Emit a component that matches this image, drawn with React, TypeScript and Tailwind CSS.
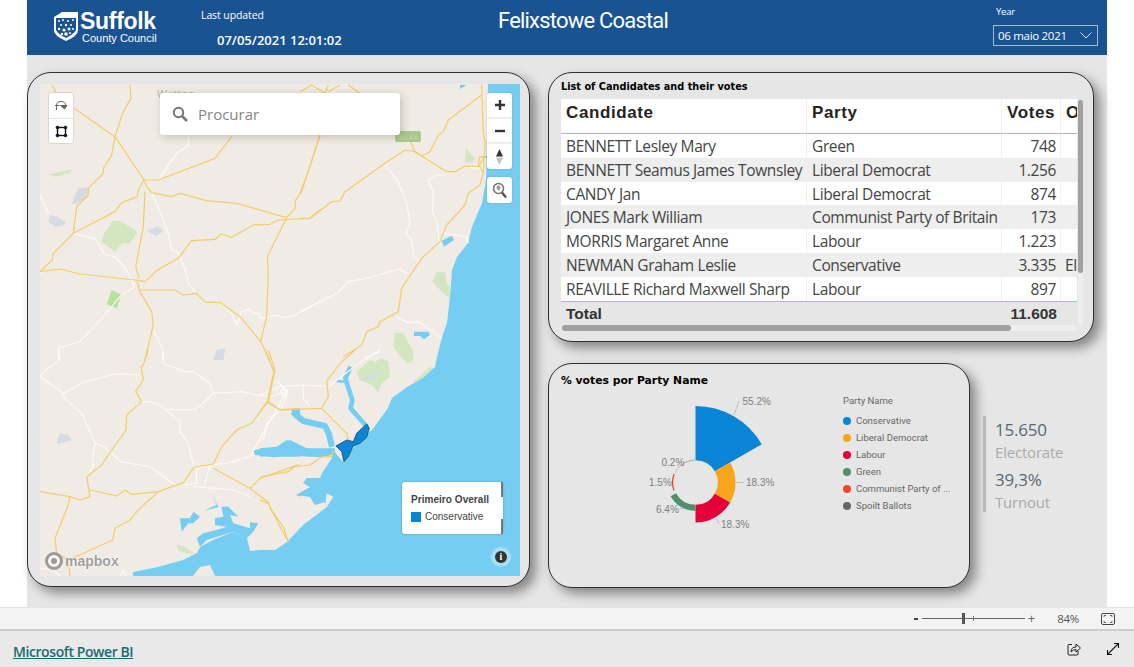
import React from "react";

const Z6 = "translate(20 60) scale(0.3333)";
const Z7 = "translate(20 350) scale(0.3333)";
const Z4 = "translate(260 350) scale(0.3333)";
const Z9 = "translate(300 70) scale(0.3333)";

const roads: { t: string; y: string[]; w: string[] }[] = [
  {
    t: Z6,
    w: [
      "60,405 85,460",
      "505,225 505,258 470,280 420,355",
      "395,398 420,455 445,520 455,570 475,580 495,625 505,670 525,695",
      "160,520 225,535 255,585 285,590 320,630 345,680 330,690 305,705 245,775 180,845 115,865 115,900",
      "600,727 635,760 650,795 665,755 688,748 700,760 715,760 722,775 745,770 770,765 785,772 820,768 900,725",
      "400,810 430,870 430,900",
      "60,640 80,630",
    ],
    y: [
      "95,75 110,100",
      "160,143 285,230 372,360",
      "330,75 333,115 310,155 285,230 275,285 250,325 250,340 205,385 205,405 170,440 160,520",
      "372,360 415,360 585,295 635,230",
      "372,360 355,390 352,410 305,428 285,455 160,520 100,580 97,600 60,635",
      "60,635 120,627 180,642 345,660 375,665 410,632 475,595 515,542 585,538 603,522 635,532 700,495 750,493 775,480 870,475 900,450",
      "375,395 370,500 347,620 357,655",
      "372,360 380,380 395,398 455,410 480,400 560,422 650,430 800,473",
      "800,473 825,445 827,420 845,395 900,225",
      "800,473 742,590 745,640 740,770 722,845",
      "350,665 360,690 465,690 490,705 530,700 555,727 600,727 660,770 722,845 750,900",
      "357,690 395,755 400,795 375,900",
    ],
  },
  {
    t: Z7,
    w: [
      "115,0 120,30 70,65 60,80 130,130 195,95 285,72 360,75",
      "125,130 135,145 185,190 225,280 218,320 220,350 200,380",
      "225,280 260,295 300,335 390,350 465,405",
      "365,155 390,155 420,165 480,215 480,245 505,280 522,352",
      "445,178 525,180 580,130 670,125 710,135 750,140 800,125 770,90",
      "430,0 430,40 495,65 520,65 570,100 580,130",
      "580,342 530,355 530,400 490,405",
      "555,400 570,345 620,340 690,320 740,230 800,125",
      "520,410 640,420 690,440",
      "60,655 100,660 120,680",
      "300,680 310,660 320,680",
    ],
    y: [
      "385,0 370,45 363,50 370,90 347,125 365,155 320,195 318,240 265,315 245,345 200,380 210,440 180,450 150,440 60,425",
      "150,440 145,465 105,565 110,610 145,630 150,680",
      "735,0 762,65 742,155 695,220 650,240 605,290 580,342 522,352 490,397 415,425 335,433 315,420 290,438 210,420",
      "415,425 355,480 330,510 285,535 278,570 145,630",
      "742,155 780,180 840,175",
      "580,355 690,415 725,380 805,365 830,345 840,345",
      "690,415 745,457 750,475 790,530 805,578",
    ],
  },
  {
    t: Z4,
    w: [
      "0,135 60,110 130,105 205,110",
      "130,105 130,145 150,170",
      "60,100 80,140 60,180 20,220 10,270",
      "205,110 290,45 360,0",
    ],
    y: [
      "25,155 60,180 185,175 205,140 200,95 240,40 285,0",
      "0,185 25,155 45,60 25,0",
      "185,175 260,250 265,270",
      "0,385 100,350 150,345 185,320 215,320 220,300",
      "0,450 25,460 65,540 85,575",
    ],
  },
  {
    t: Z9,
    w: [
      "255,285 295,335 320,400 330,460 318,490 335,510 342,560 360,575",
      "438,315 415,315 385,330 400,370 397,425 412,460 417,515",
      "430,490 500,500 505,520",
      "0,725 110,670 145,635 200,625 295,597 325,610",
      "290,740 320,757 360,757 425,805",
      "195,865 240,845",
      "510,292 550,295",
    ],
    y: [
      "545,45 550,190 555,215 550,310 540,345 505,370 495,405 440,465 420,515 365,565 305,655 295,725 240,755 235,770 200,785 185,825 130,860",
      "545,75 445,150 430,185 415,195 390,245 365,258 345,245 315,240 255,280 135,365 120,393 95,395 30,445 0,445",
      "345,245 440,305 465,305 495,288 535,290 555,260 540,260 535,280 550,310",
      "325,200 345,245",
      "60,195 30,290 0,370",
      "0,65 35,45 75,70 85,45",
      "85,65 120,45",
      "145,45 180,70",
    ],
  },
];

const greens: [string, string][] = [
  [Z6, "85,343 160,328 145,340 105,350"],
  [Z6, "280,480 305,485 352,515 330,550 305,550 285,575 245,545 250,525"],
  [Z9, "497,235 510,250 525,265 515,278 495,275"],
  [Z9, "410,605 435,605 440,640 450,650 448,685 430,670 397,635"],
  [Z9, "285,790 310,790 340,845 340,870 310,870 280,830"],
  [Z4, "290,65 330,30 345,35 365,25 385,35 390,80 365,100 355,125 335,105 300,90"],
  [Z4, "405,0 445,0 460,35 440,40 420,10"],
  [Z4, "460,95 510,50 525,60 490,95"],
];
const greens2: [string, string][] = [[Z6, "275,690 305,705 290,745 260,733"]];
const lakes: [string, string][] = [
  [Z6, "175,385 205,382 205,408 170,432 155,432"],
  [Z6, "90,465 110,470 135,485 135,495 105,500 85,485"],
  [Z6, "380,513 415,498 430,513 410,528"],
  [Z6, "590,870 615,865 605,900 580,900"],
  [Z7, "595,0 615,0 610,30 580,30"],
  [Z7, "120,250 145,255 155,270 110,282"],
  [Z4, "305,85 370,62 340,90"],
];
const water: [string, string][] = [
  [Z4, "0,295 50,290 90,270 140,295 225,295 225,312 190,322 150,320 60,315 0,320"],
  [Z7, "700,300 740,295 765,295 800,270 840,290 840,320 790,320 760,322 705,315"],
  [Z7, "830,435 840,430 840,440"],
  [Z7, "815,180 840,175 840,215 820,200"],
  [Z7, "480,505 510,505 520,485 540,500 520,520 505,520 485,545"],
  [Z7, "585,505 610,500 605,470 595,470 570,425 590,465 552,482 600,470 625,470 655,500 630,495 640,520 690,535 690,517 715,520 700,545 680,565 640,545 560,570 540,590 530,565 550,550 590,540 620,530 585,525"],
  [Z9, "425,512 455,497 462,510 432,530"],
  [Z9, "342,785 385,785 390,795 372,808 360,798 342,798"],
  [Z9, "480,45 500,45 480,57"],
  [Z9, "545,258 565,258 565,264 548,264"],
];
const rivers: [string, number][] = [
  ["98,185 130,213 195,228 206,250 216,290", 18],
  ["272,50 256,85 264,110 277,150 272,175 292,198 322,232", 14],
  ["230,93 262,96", 8],
];

const sea =
  "520,84 488,84 486,180 482,203 472,227 468,243 457,257 452,270 450,297 447,323 442,337 437,357 435,367 423,378 407,387 392,398 388,408 372,430 362,437 343,462 333,450 332,458 322,473 320,478 307,478 303,483 310,487 296,495 310,497 315,505 325,502 327,507 303,525 287,542 275,550 260,550 250,551 247,538 233,532 213,540 200,547 197,553 183,560 158,567 133,572 133,576 520,576";

function MapDrawing() {
  return (
    <svg viewBox="40 84 480 492" className="block w-full h-full">
      <rect x="40" y="84" width="480" height="492" fill="#f0ebe4" />
      {greens.map(([t, p], i) => (
        <polygon key={i} transform={t} points={p} fill="#d2e6bf" />
      ))}
      {greens2.map(([t, p], i) => (
        <polygon key={i} transform={t} points={p} fill="#b5e29f" />
      ))}
      {lakes.map(([t, p], i) => (
        <polygon key={i} transform={t} points={p} fill="#d5dae3" />
      ))}
      <polygon points={sea} fill="#75cdf2" />
      {water.map(([t, p], i) => (
        <polygon key={i} transform={t} points={p} fill="#75cdf2" />
      ))}
      {rivers.map(([p, w], i) => (
        <polyline key={i} transform={Z4} points={p} fill="none" stroke="#75cdf2" strokeWidth={w} strokeLinejoin="round" />
      ))}
      <polygon transform={Z4} points="200,430 220,440 200,472 197,450" fill="#f0ebe4" />
      <polygon points="193,576 200,567 210,565 215,576" fill="#f0ebe4" />
      <polygon transform={Z7} points="470,585 495,590 525,610 495,610 475,600" fill="#d2e6bf" />
      {roads.map((g, i) => (
        <g key={i} transform={g.t} fill="none" stroke="#fbfaf7" strokeWidth="3.6" strokeLinejoin="round">
          {g.w.map((p, j) => (
            <polyline key={j} points={p} />
          ))}
        </g>
      ))}
      <circle cx="284" cy="392" r="3.5" fill="none" stroke="#fbfaf7" strokeWidth="1.3" />
      {roads.map((g, i) => (
        <g key={i} transform={g.t} fill="none" stroke="#f2cd68" strokeWidth="3.6" strokeLinejoin="round">
          {g.y.map((p, j) => (
            <polyline key={j} points={p} />
          ))}
        </g>
      ))}
      <polygon
        transform={Z4}
        points="320,222 328,235 320,262 300,280 280,288 265,320 252,335 245,305 228,288 260,270 280,275 290,250"
        fill="#0a85d6"
        stroke="#1d4a6e"
        strokeWidth="2.5"
      />
      <rect x="395" y="131" width="26" height="11" rx="2" fill="#a7c98f" />
      <text x="408" y="140" textAnchor="middle" fontSize="8" fill="#c4d49a" fontFamily="'Liberation Sans',sans-serif">
        A144
      </text>
      <text x="157" y="98" fontSize="11" fill="#b5b2ad" fontFamily="'Open Sans',sans-serif">
        Wetton
      </text>
    </svg>
  );
}

function MapCard() {
  return (
    <div className="relative w-[503px] h-[515px] shrink-0 rounded-[24px] border border-[#2e2e2e] bg-[#e6e6e6] pt-[11px] pl-[12px] shadow-[6px_6px_12px_rgba(0,0,0,0.42)]">
      <div className="relative w-[480px] h-[492px] overflow-hidden">
        <MapDrawing />
        <div className="absolute left-[8px] top-[8px] w-[26px] h-[52px] rounded-[3px] bg-white border border-[#ddd7ce] flex flex-col items-center">
          <div className="h-[26px] w-full flex items-center justify-center border-b border-[#e8e8e8]">
            <svg width="14" height="14" viewBox="0 0 14 14" fill="none" stroke="#666" strokeWidth="1">
              <path d="M2.5 11 V6.5 Q2.5 2.5 7 2.5 Q11.5 2.5 11.5 6" />
              <path d="M1 6.5 H5.5 M6.5 6.5 H13 L10.5 10 Z" fill="#666" />
            </svg>
          </div>
          <div className="flex-1 w-full flex items-center justify-center">
            <svg width="13" height="13" viewBox="0 0 13 13" fill="#111" stroke="#111">
              <rect x="2.5" y="2.5" width="8" height="8" fill="none" strokeWidth="1.4" />
              <circle cx="2.5" cy="2.5" r="1.3" />
              <circle cx="10.5" cy="2.5" r="1.3" />
              <circle cx="2.5" cy="10.5" r="1.3" />
              <circle cx="10.5" cy="10.5" r="1.3" />
            </svg>
          </div>
        </div>
        <div className="absolute left-[120px] top-[9px] w-[240px] h-[42px] rounded-[3px] bg-white shadow-[2px_2px_8px_rgba(90,70,50,0.28)] flex items-center pl-[12px] gap-[10px]">
          <svg width="16" height="16" viewBox="0 0 16 16" fill="none" stroke="#757575" strokeWidth="2">
            <circle cx="6.5" cy="6.5" r="4.7" />
            <path d="M10 10 L15 15" strokeWidth="2.5" />
          </svg>
          <span className="text-[15px] text-[#858585] font-['Open_Sans',sans-serif]">Procurar</span>
        </div>
        <div className="absolute left-[447px] top-[9px] w-[25px] h-[76px] rounded-[3px] bg-white shadow-[0_0_2px_rgba(0,0,0,0.2)] flex flex-col items-center">
          <div className="h-[26px] w-full flex items-center justify-center border-b-2 border-[#eeeeee]">
            <svg width="12" height="12" viewBox="0 0 12 12">
              <path d="M6 1 V11 M1 6 H11" stroke="#333" strokeWidth="2.4" />
            </svg>
          </div>
          <div className="h-[25px] w-full flex items-center justify-center border-b-2 border-[#eeeeee]">
            <svg width="10" height="4" viewBox="0 0 10 4">
              <path d="M0 2 H10" stroke="#333" strokeWidth="2.4" />
            </svg>
          </div>
          <div className="flex-1 w-full flex items-center justify-center">
            <svg width="9" height="16" viewBox="0 0 9 16">
              <path d="M4.5 0 L8 7.5 H1 Z" fill="#333" />
              <path d="M4.5 16 L8 8.5 H1 Z" fill="#c4c4c4" />
            </svg>
          </div>
        </div>
        <div className="absolute left-[447px] top-[93px] w-[25px] h-[26px] rounded-[3px] bg-white shadow-[0_0_2px_rgba(0,0,0,0.2)] flex items-center justify-center">
          <svg width="15" height="17" viewBox="0 0 15 17" fill="none">
            <circle cx="6.5" cy="6.5" r="5" stroke="#777" strokeWidth="1.6" />
            <path d="M6.5 3.5 a2 2 0 0 1 2 2 c0 1.2 -2 3.5 -2 3.5 s-2 -2.3 -2 -3.5 a2 2 0 0 1 2 -2z" fill="#999" />
            <path d="M10 10.5 L14 15.5" stroke="#555" strokeWidth="2.4" />
          </svg>
        </div>
        <div className="absolute left-[362px] top-[398px] w-[101px] h-[52px] rounded-[3px] bg-white shadow-[0_0_2px_rgba(40,80,110,0.5)] pl-[9px] pt-[10px] font-['Liberation_Sans',sans-serif]">
          <div className="text-[10px] leading-[15px] font-bold text-[#444] tracking-[0.05px] whitespace-nowrap">Primeiro Overall</div>
          <div className="mt-[3px] flex items-center gap-[4px]">
            <span className="w-[10px] h-[10px] bg-[#0a85d6]" />
            <span className="text-[10px] leading-[14px] text-[#444]">Conservative</span>
          </div>
          <span className="absolute right-0 top-0 w-[2px] h-[15px] bg-[#777]" />
          <span className="absolute right-0 bottom-0 w-[2px] h-[15px] bg-[#777]" />
        </div>
        <div className="absolute left-[451px] top-[463px] w-[20px] h-[20px] rounded-full bg-[#a6def5] flex items-center justify-center">
          <span className="w-[12px] h-[12px] rounded-full bg-[#333] flex items-center justify-center text-white text-[10px] leading-none font-bold font-['Liberation_Serif',serif]">
            i
          </span>
        </div>
        <div className="absolute left-[5px] top-[468px] flex items-center gap-[2px]">
          <span className="w-[18px] h-[18px] rounded-full border-[3px] border-[#9a9a9a] bg-white/70 flex items-center justify-center">
            <span className="w-[6px] h-[6px] rounded-full bg-[#9a9a9a]" />
          </span>
          <span className="text-[14px] leading-[16px] font-bold text-[#a0a0a0] font-['Liberation_Sans',sans-serif] [text-shadow:0_0_2px_#fff,0_0_2px_#fff]">
            mapbox
          </span>
        </div>
      </div>
    </div>
  );
}

const rows: [string, string, string, string][] = [
  ["BENNETT Lesley Mary", "Green", "748", ""],
  ["BENNETT Seamus James Townsley", "Liberal Democrat", "1.256", ""],
  ["CANDY Jan", "Liberal Democrat", "874", ""],
  ["JONES Mark William", "Communist Party of Britain", "173", ""],
  ["MORRIS Margaret Anne", "Labour", "1.223", ""],
  ["NEWMAN Graham Leslie", "Conservative", "3.335", "Elected"],
  ["REAVILLE Richard Maxwell Sharp", "Labour", "897", ""],
];
const rowH = [24, 24, 23, 24, 24, 24, 24];
const cols = "grid grid-cols-[246px_195px_59px_16px]";

function TableCard() {
  return (
    <div className="relative w-[546px] h-[270px] shrink-0 rounded-[24px] border border-[#2e2e2e] bg-[#e6e6e6] pt-[8px] pl-[12px] shadow-[6px_6px_12px_rgba(0,0,0,0.42)]">
      <div className="text-[9.75px] leading-[12px] font-bold text-black font-['DejaVu_Sans',sans-serif]">
        List of Candidates and their votes
      </div>
      <div className="mt-[6px] w-[516px] overflow-hidden font-['Open_Sans',sans-serif] text-[#444]">
        <div className={`${cols} h-[35px] bg-white border-b border-[#7fd0ca] text-[#252423] font-bold text-[17px] leading-[28px] font-['Liberation_Sans',sans-serif] tracking-[0.6px]`}>
          <div className="pl-[5px] border-r border-[#f0f0f0]">Candidate</div>
          <div className="pl-[5px] border-r border-[#f0f0f0]">Party</div>
          <div className="pl-[5px] border-r border-[#f0f0f0]">Votes</div>
          <div className="pl-[5px] overflow-hidden">Outcome</div>
        </div>
        {rows.map((r, i) => (
          <div
            key={r[0]}
            style={{ height: rowH[i] }}
            className={`${cols} items-center text-[15.5px] leading-[20px] tracking-[-0.38px] whitespace-nowrap ${i % 2 ? "bg-[#eeeeee]" : "bg-white"}`}
          >
            <div className="pl-[5px] h-full flex items-center border-r border-[#f0f0f0]">{r[0]}</div>
            <div className="pl-[5px] h-full flex items-center border-r border-[#f0f0f0]">{r[1]}</div>
            <div className="pr-[4px] h-full flex items-center justify-end border-r border-[#f0f0f0]">{r[2]}</div>
            <div className="pl-[4px] h-full flex items-center overflow-hidden">{r[3]}</div>
          </div>
        ))}
        <div className={`${cols} h-[24px] pb-[2px] items-center border-t border-[#7fd0ca] bg-[#e6e6e6] font-bold text-[15.5px] text-[#333] font-['Liberation_Sans',sans-serif]`}>
          <div className="pl-[5px] col-span-2">Total</div>
          <div className="pr-[4px] text-right">11.608</div>
          <div />
        </div>
      </div>
      <div className="ml-[1px] w-[515px] h-[6px] rounded-full bg-[#eeeeee]">
        <div className="w-[449px] h-full rounded-full bg-[#a0a0a0]" />
      </div>
      <div className="absolute left-[529px] top-[27px] w-[5px] h-[224px] rounded-full bg-[#eeeeee]">
        <div className="h-[173px] rounded-full bg-[#a0a0a0]" />
      </div>
    </div>
  );
}

const legend: [string, string][] = [
  ["Conservative", "#0a85d6"],
  ["Liberal Democrat", "#f8a51b"],
  ["Labour", "#e4003b"],
  ["Green", "#50916c"],
  ["Communist Party of ...", "#f4452d"],
  ["Spoilt Ballots", "#666666"],
];

function sector(r: number, r0: number, a0: number, a1: number) {
  const cx = 695.5;
  const cy = 480.5;
  const p = (rad: number, a: number) => {
    const t = (a * Math.PI) / 180;
    return `${(cx + rad * Math.sin(t)).toFixed(2)} ${(cy - rad * Math.cos(t)).toFixed(2)}`;
  };
  return `M${p(r0, a0)} L${p(r, a0)} A${r} ${r} 0 0 1 ${p(r, a1)} L${p(r0, a1)} A${r0} ${r0} 0 0 0 ${p(r0, a0)} Z`;
}

function Donut() {
  const labels: [string, number, number][] = [
    ["55.2%", 742.5, 402.5],
    ["18.3%", 746, 484],
    ["18.3%", 721, 525.5],
    ["6.4%", 656, 511],
    ["1.5%", 649, 484],
    ["0.2%", 661.5, 464],
  ];
  return (
    <svg viewBox="640 390 150 150" className="w-[150px] h-[150px] shrink-0">
      <path d={sector(76.5, 22.3, 0, 60)} fill="#0a85d6" />
      <path d={sector(40, 22.3, 60, 120)} fill="#f8a51b" />
      <path d={sector(40, 22.3, 120, 180)} fill="#e4003b" />
      <path d={sector(28.5, 22.3, 180, 241)} fill="#50916c" />
      <path d={sector(23.6, 22.3, 250, 292)} fill="#f4452d" />
      <path d={sector(22.9, 22.3, 295, 360)} fill="#a8a8a8" />
      <g stroke="#b5b5b5" strokeWidth="0.8" fill="none">
        <path d="M734 413 L739 399" />
        <path d="M736 480.5 H744" />
        <path d="M716 516 L719 522" />
        <path d="M679 507 L683 506" />
        <path d="M683 461 L695 458" />
      </g>
      {labels.map(([t, x, y]) => (
        <text key={t + x} x={x} y={y} fontSize="10" fill="#808080" fontFamily="'Liberation Sans',sans-serif">
          {t}
        </text>
      ))}
    </svg>
  );
}

function DonutCard() {
  return (
    <div className="w-[422px] h-[225px] shrink-0 rounded-[24px] border border-[#2e2e2e] bg-[#e6e6e6] pt-[9px] pl-[12px] shadow-[6px_6px_12px_rgba(0,0,0,0.42)]">
      <div className="text-[10.8px] leading-[15px] font-bold text-black font-['DejaVu_Sans',sans-serif]">% votes por Party Name</div>
      <div className="flex mt-[2px]">
        <div className="ml-[79px] mt-[2px]">
          <Donut />
        </div>
        <div className="ml-[53px] mt-[5px] font-['Roboto',sans-serif] text-[#666]">
          <div className="text-[9.5px] leading-[12px] mb-[8px]">Party Name</div>
          <div className="flex flex-col gap-[5px]">
            {legend.map(([n, c]) => (
              <div key={n} className="flex items-center gap-[5px] h-[12px] text-[9.5px] leading-[12px] whitespace-nowrap">
                <span style={{ background: c }} className="w-[8px] h-[8px] rounded-full" />
                {n}
              </div>
            ))}
          </div>
        </div>
      </div>
    </div>
  );
}

function Kpi() {
  return (
    <div className="ml-[13px] mt-[53px] h-[96px] border-l-[3px] border-[#b9b9b9] pl-[9px] font-['Open_Sans',sans-serif] tracking-[-0.2px]">
      <div className="text-[17px] leading-[27px] text-[#5c6670]">15.650</div>
      <div className="text-[15px] leading-[18px] text-[#aaaaaa]">Electorate</div>
      <div className="mt-[6px] text-[17px] leading-[26px] text-[#5c6670]">39,3%</div>
      <div className="text-[15px] leading-[18px] text-[#aaaaaa]">Turnout</div>
    </div>
  );
}

function Header() {
  return (
    <div className="h-[55px] shrink-0 bg-[#1a5391] flex text-white font-['Open_Sans',sans-serif]">
      <div className="ml-[27px] mt-[12px] w-[103px] shrink-0 flex">
        <svg width="24" height="29" viewBox="0 0 24 29" className="shrink-0">
          <path d="M0 5 L8 0 H24 V18 Q24 24 12 29 Q0 24 0 18 Z" fill="#fff" />
          <path d="M2 6 H22 V18 Q20 22 12 26 Q4 22 2 18 Z" fill="#1a5391" />
          <g fill="#fff">
            <circle cx="5" cy="9" r="1" />
            <circle cx="9" cy="8" r="1" />
            <circle cx="14" cy="9" r="1" />
            <circle cx="19" cy="8" r="1" />
            <circle cx="7" cy="13" r="1" />
            <circle cx="12" cy="13" r="1.2" />
            <circle cx="17" cy="13" r="1" />
            <circle cx="5" cy="17" r="1.2" />
            <circle cx="10" cy="18" r="1.6" />
            <circle cx="15" cy="17" r="1.5" />
            <circle cx="19" cy="17" r="1" />
            <circle cx="8" cy="22" r="1.2" />
            <circle cx="12" cy="22" r="1.8" />
            <circle cx="16" cy="21" r="1" />
          </g>
        </svg>
        <div className="ml-[2px] -mt-[2px] font-['Liberation_Sans',sans-serif]">
          <div className="text-[23px] leading-[23px] font-bold tracking-[-0.3px]">Suffolk</div>
          <div className="text-[11px] leading-[13px] mt-[-1px] ml-[2px] whitespace-nowrap">County Council</div>
        </div>
      </div>
      <div className="ml-[44px] mt-[8px] w-[297px] shrink-0">
        <div className="text-[10.5px] leading-[15px] tracking-[-0.1px]">Last updated</div>
        <div className="ml-[16px] mt-[8px] text-[13px] leading-[18px] font-semibold whitespace-nowrap">07/05/2021 12:01:02</div>
      </div>
      <div className="mt-[5px] w-[495px] shrink-0 text-[22px] leading-[32px] tracking-[-0.8px] whitespace-nowrap font-['Roboto',sans-serif]">
        Felixstowe Coastal
      </div>
      <div className="mt-[5px] w-[105px] shrink-0">
        <div className="ml-[3px] text-[9.5px] leading-[14px] tracking-[-0.2px]">Year</div>
        <div className="mt-[6px] h-[21px] border border-[#9fbcd6] flex items-center justify-between pl-[4px] pr-[5px] text-[11.5px] tracking-[-0.3px]">
          <span>06 maio 2021</span>
          <svg width="12" height="7" viewBox="0 0 12 7" fill="none" stroke="#dbe6f0">
            <path d="M0.5 0.5 L6 6 L11.5 0.5" />
          </svg>
        </div>
      </div>
    </div>
  );
}

function Footer() {
  return (
    <div className="shrink-0 font-['Open_Sans',sans-serif]">
      <div className="h-[24px] bg-[#f3f3f3] border-t border-[#e3e3e3] border-b-2 border-b-[#cdcdcd] flex items-center justify-end text-[#555]">
        <span className="w-[4px] h-[2px] bg-[#444] mr-[4px]" />
        <div className="relative w-[103px] h-[1px] bg-[#666]">
          <span className="absolute left-[40px] -top-[5px] w-[3px] h-[11px] bg-[#555]" />
          <span className="absolute left-[51px] -top-[2px] w-[1px] h-[5px] bg-[#777]" />
        </div>
        <span className="ml-[3px] text-[13px] leading-none text-[#666]">+</span>
        <span className="ml-[22px] text-[11.5px] tracking-[-0.3px] text-[#555]">84%</span>
        <svg className="ml-[22px] mr-[19px]" width="14" height="14" viewBox="0 0 14 14" fill="none" stroke="#444">
          <rect x="0.5" y="1.5" width="13" height="11" rx="1.5" />
          <path d="M3 5 V3.5 H5 M9 3.5 H11 V5 M3 9 V10.5 H5 M9 10.5 H11 V9" strokeWidth="0.8" />
        </svg>
      </div>
      <div className="h-[36px] bg-[#e9e9e9] flex items-center">
        <a className="ml-[13px] mt-[4px] text-[#1b6a70] underline text-[14px] font-semibold tracking-[-0.42px] cursor-pointer">Microsoft Power BI</a>
        <svg className="ml-auto" width="14" height="14" viewBox="0 0 14 14" fill="none" stroke="#222" strokeWidth="1">
          <path d="M5 2.5 H2 Q1 2.5 1 3.5 V12 Q1 13 2 13 H10 Q11 13 11 12 V9" />
          <path d="M4 10 Q4 5 9 5 V2 L13.5 6 L9 10 V7.5 Q6 7.5 4 10 Z" />
        </svg>
        <svg className="ml-[25px] mr-[14px]" width="14" height="14" viewBox="0 0 14 14" fill="none" stroke="#111" strokeWidth="1.1">
          <path d="M2 12 L12 2 M8 1.5 H12.5 V6 M1.5 8 V12.5 H6" />
        </svg>
      </div>
    </div>
  );
}

export default function App() {
  return (
    <div className="w-[1134px] h-[667px] bg-white flex flex-col overflow-hidden">
      <div className="h-[607px] shrink-0 ml-[27px] w-[1080px] bg-[#e6e6e6] flex flex-col">
        <Header />
        <div className="flex pt-[17px]">
          <MapCard />
          <div className="ml-[18px] flex flex-col gap-[21px]">
            <TableCard />
            <div className="flex">
              <DonutCard />
              <Kpi />
            </div>
          </div>
        </div>
      </div>
      <Footer />
    </div>
  );
}
